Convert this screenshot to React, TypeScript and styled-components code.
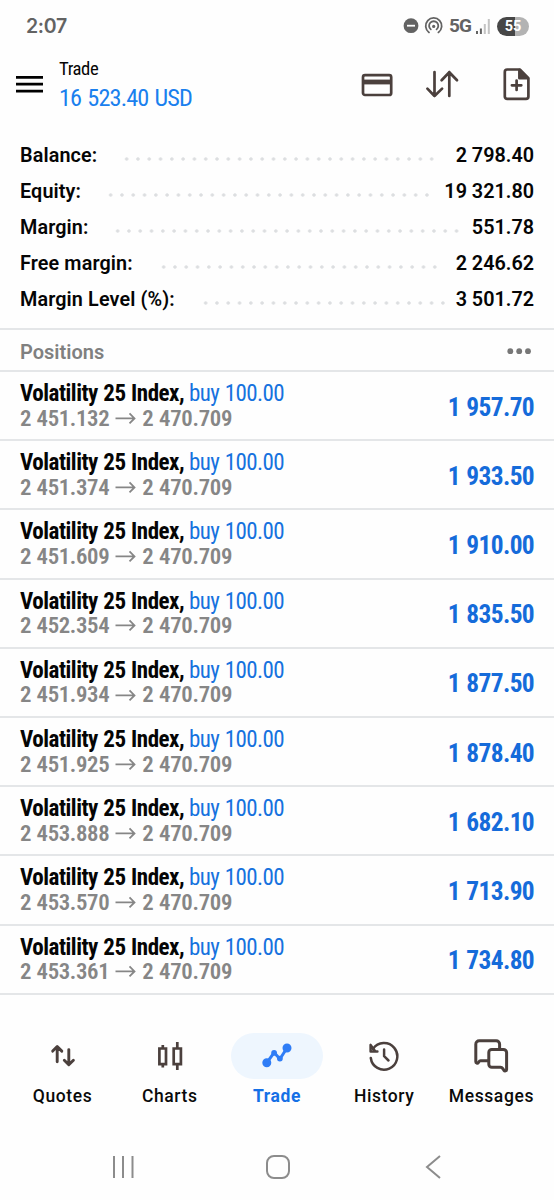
import React from 'react';
import styled, { createGlobalStyle } from 'styled-components';

const ink = '#4b403d';
const line = '#e4e6e8';

const Global = createGlobalStyle`
  * { box-sizing: border-box; }
  body { margin: 0; background: #fefefe; font-family: Roboto, "Liberation Sans", sans-serif; color: #050505; }
`;

const Screen = styled.main`
  width: 554px;
  height: 1200px;
  display: flex;
  flex-direction: column;
  overflow: hidden;
`;

const StatusBar = styled.div`
  height: 52px;
  padding: 0 25px 0 26px;
  display: flex;
  align-items: center;
  justify-content: space-between;
  color: #636363;
`;

const Clock = styled.span`
  font: 600 19.5px/24px Inter, sans-serif;
  letter-spacing: -0.3px;
`;

const Indicators = styled.div`
  display: flex;
  align-items: center;
`;

const Network = styled.span`
  width: 22px;
  font-size: 19px;
  font-weight: 700;
  line-height: 24px;
  letter-spacing: -0.8px;
  margin: 0 5px 0 6px;
`;

const Battery = styled.span`
  width: 32px;
  height: 19px;
  margin-left: 7px;
  border-radius: 10px;
  background: linear-gradient(90deg, #474747 55%, #b3b3b3 55%);
  color: #fff;
  font-size: 14.5px;
  font-weight: 700;
  line-height: 20px;
  text-align: center;
`;

const Header = styled.header`
  height: 66px;
  padding: 0 23px 0 16px;
  display: flex;
  align-items: center;
`;

const Narrow = styled.span<{ $size: number; $weight?: number; $color?: string; $track?: number; $gap?: number }>`
  font-family: "Roboto Condensed", Roboto, sans-serif;
  font-stretch: 75%;
  font-size: ${(p) => p.$size}px;
  font-weight: ${(p) => p.$weight ?? 400};
  letter-spacing: ${(p) => p.$track ?? 0}px;
  word-spacing: ${(p) => p.$gap ?? 0}px;
  color: ${(p) => p.$color ?? 'inherit'};
  white-space: nowrap;
`;

const Titles = styled.div`
  margin-left: 16px;
  padding-bottom: 3px;
  flex: 1;
  display: flex;
  flex-direction: column;
  line-height: 28.5px;
`;

const Actions = styled.div`
  display: flex;
  align-items: center;
`;

const Summary = styled.section`
  height: 212px;
  padding: 19px 20px 0;
  border-bottom: 2px solid ${line};
`;

const SummaryRow = styled.div`
  height: 36px;
  display: flex;
  align-items: center;
  font-size: 19.8px;
  font-weight: 600;
`;

const SummaryLabel = styled.span<{ $width: number }>`
  width: ${(p) => p.$width}px;
  letter-spacing: 0.12px;
  white-space: nowrap;
`;

const Leader = styled.span<{ $dots: number }>`
  width: ${(p) => p.$dots * 11.3}px;
  height: 4px;
  margin-top: 7px;
  background: radial-gradient(circle at center, #dcdee0 1.3px, transparent 2.1px) 0 0 / 11.3px 4px repeat-x;
`;

const SummaryValue = styled.span`
  margin-left: auto;
`;

const SectionHead = styled.div`
  height: 42px;
  padding: 3px 22px 0 20px;
  display: flex;
  align-items: center;
  justify-content: space-between;
  border-bottom: 2px solid ${line};
  color: #808080;
  font-size: 20px;
  font-weight: 600;
`;

const Position = styled.div`
  height: 69.2px;
  padding: 2px 20px 0;
  display: flex;
  align-items: center;
  justify-content: space-between;
  border-bottom: 2px solid ${line};
`;

const Details = styled.div`
  display: flex;
  flex-direction: column;
  line-height: 24.5px;
`;

const DetailLine = styled.div`
  display: flex;
  align-items: center;
  height: 24.5px;
`;

const Instrument = styled(Narrow)`
  width: 169px;
`;

const Tabs = styled.nav`
  margin-top: 38px;
  padding: 0 9px;
  display: grid;
  grid-template-columns: repeat(5, 1fr);
`;

const Tab = styled.div<{ $active?: boolean }>`
  display: flex;
  flex-direction: column;
  align-items: center;
  font-size: 17.5px;
  font-weight: ${(p) => (p.$active ? 700 : 500)};
  letter-spacing: 0.6px;
  line-height: 24px;
  color: ${(p) => (p.$active ? '#1570e6' : '#0a0a0a')};
`;

const Pill = styled.span<{ $active?: boolean }>`
  width: 92px;
  height: 46px;
  margin-bottom: 5px;
  border-radius: 23px;
  display: grid;
  place-items: center;
  background: ${(p) => (p.$active ? '#eef6fe' : 'transparent')};
`;

const SystemBar = styled.div`
  margin-top: auto;
  height: 66px;
  padding: 0 113px 0 112px;
  display: flex;
  align-items: center;
  justify-content: space-between;
`;

const HomeKey = styled.svg`
  margin-right: 3px;
`;

const summary = [
  { label: 'Balance:', value: '2 798.40', start: 101, dots: 28 },
  { label: 'Equity:', value: '19 321.80', start: 84.7, dots: 29 },
  { label: 'Margin:', value: '551.78', start: 92.3, dots: 31 },
  { label: 'Free margin:', value: '2 246.62', start: 138, dots: 25 },
  { label: 'Margin Level (%):', value: '3 501.72', start: 179.7, dots: 22 },
];

const positions = [
  ['2 451.132', '1 957.70'],
  ['2 451.374', '1 933.50'],
  ['2 451.609', '1 910.00'],
  ['2 452.354', '1 835.50'],
  ['2 451.934', '1 877.50'],
  ['2 451.925', '1 878.40'],
  ['2 453.888', '1 682.10'],
  ['2 453.570', '1 713.90'],
  ['2 453.361', '1 734.80'],
];

const QuotesIcon = () => (
  <svg width="26" height="26" viewBox="0 0 26 26" fill="none" stroke={ink} strokeWidth="2.9" strokeLinecap="round" strokeLinejoin="round">
    <path d="M7.2 18.8V4M2.7 8.1l4.5-4.6 4.6 4.6M18.8 6.6v14.6M14.3 17.2l4.5 4.6 4.6-4.6" />
  </svg>
);

const ChartsIcon = () => (
  <svg width="26" height="30" viewBox="0 0 26 30" fill="none" stroke={ink} strokeWidth="2.7">
    <path d="M2.4 7.5h6.6v15.6H2.4zM5.8 4v3.5M5.8 23v3.4M16.7 7.5h7.2v15.6h-7.2zM20.3 1v6.5M20.3 23v6" />
  </svg>
);

const TradeIcon = () => (
  <svg width="32" height="28" viewBox="0 0 32 28" fill="#2f7df6" stroke="#2f7df6" strokeWidth="3" strokeLinejoin="round">
    <path d="M5.7 20.8L13.1 10.6L18.9 17L26 6" fill="none" />
    <circle cx="5.8" cy="20.8" r="3" />
    <circle cx="26" cy="6" r="3" />
    <circle cx="13.1" cy="10.8" r="1.4" />
    <circle cx="18.9" cy="16.6" r="1.4" />
  </svg>
);

const HistoryIcon = () => (
  <svg width="32" height="32" viewBox="0 0 32 32" fill="none" stroke={ink} strokeWidth="2.5" strokeLinecap="round" strokeLinejoin="round">
    <path d="M2.8 18A13.3 13.3 0 1 0 5 8.9" />
    <path d="M2.6 5v6.5h6.8M2.6 5l4.8 6.4M16.1 9.4v6.8l4.4 4.3" />
  </svg>
);

const MessagesIcon = () => (
  <svg width="38" height="36" viewBox="0 0 38 36" fill="none" stroke={ink} strokeWidth="3" strokeLinecap="round" strokeLinejoin="round">
    <path d="M16.5 22.8H8.6c-1 0-1.6.8-2.3 1.8-.7 1-2.5.5-2.5-.9V6.2A3.4 3.4 0 0 1 7.2 2.8h17a3.4 3.4 0 0 1 3.4 3.4v5" />
    <path d="M19.8 11.4h11.6a3.2 3.2 0 0 1 3.2 3.2v16.8c0 1.7-1.9 2-2.7.9l-1.1-1.7a3 3 0 0 0-2.4-1.3h-8.6a3 3 0 0 1-3-3V14.5a3 3 0 0 1 3-3.1z" />
  </svg>
);

const tabs = [
  { name: 'Quotes', icon: <QuotesIcon /> },
  { name: 'Charts', icon: <ChartsIcon /> },
  { name: 'Trade', icon: <TradeIcon />, active: true },
  { name: 'History', icon: <HistoryIcon /> },
  { name: 'Messages', icon: <MessagesIcon /> },
];

export default function App() {
  return (
    <Screen>
      <Global />
      <StatusBar>
        <Clock>2:07</Clock>
        <Indicators>
          <svg width="40" height="18" viewBox="0 0 40 18" fill="none" stroke="#636363">
            <circle cx="8" cy="8.7" r="7.4" fill="#636363" stroke="none" />
            <path d="M4 8.7h8" stroke="#fff" strokeWidth="1.8" />
            <g strokeWidth="1.8" strokeLinecap="round">
              <path d="M26 15.4a8 8 0 1 1 9.4 0" />
              <path d="M27.8 12.4a4.6 4.6 0 1 1 5.8 0" />
            </g>
            <circle cx="30.7" cy="9.4" r="1.6" fill="#636363" stroke="none" />
          </svg>
          <Network>5G</Network>
          <svg width="14" height="15" viewBox="0 0 14 15" strokeWidth="2">
            <path d="M1 12V15M4.9 9.5V15" stroke="#636363" />
            <path d="M8.8 5V15M12.8 0V15" stroke="#c4c4c4" />
          </svg>
          <Battery>55</Battery>
        </Indicators>
      </StatusBar>
      <Header>
        <svg width="27" height="20" viewBox="0 0 27 20" stroke="#000" strokeWidth="2.8">
          <path d="M0 2.4h27M0 9.2h27M0 16.2h27" />
        </svg>
        <Titles>
          <Narrow $size={18.7} $track={-0.4}>Trade</Narrow>
          <Narrow $size={24.3} $track={-0.9} $gap={1.5} $color="#1a80ee">16 523.40 USD</Narrow>
        </Titles>
        <Actions>
          <svg width="170" height="34" viewBox="0 0 170 34" fill="none" stroke={ink} strokeWidth="2.7" strokeLinecap="round" strokeLinejoin="round">
            <rect x="2" y="7.2" width="28.2" height="19.8" rx="2" />
            <path d="M2 14h28" strokeWidth="4.8" strokeLinecap="butt" />
            <path d="M73.5 4v24M66.4 20.6l7.1 7.4 7.6-7.4M88.3 28V4.2M80.6 12.2l7.7-8 7.7 8" />
            <path d="M146.2 1.5h12.6l8.6 8.6v18.4a2.4 2.4 0 0 1-2.4 2.4h-18.8a2.4 2.4 0 0 1-2.4-2.4V3.9a2.4 2.4 0 0 1 2.4-2.4z" />
            <path d="M158.4 2v8.2h8.4z" fill={ink} />
            <path d="M155.6 12.6v9.4M150.9 17.3h9.4" />
          </svg>
        </Actions>
      </Header>
      <Summary>
        {summary.map((s) => (
          <SummaryRow key={s.label}>
            <SummaryLabel $width={s.start}>{s.label}</SummaryLabel>
            <Leader $dots={s.dots} />
            <SummaryValue>{s.value}</SummaryValue>
          </SummaryRow>
        ))}
      </Summary>
      <SectionHead>
        <span>Positions</span>
        <svg width="25" height="7" viewBox="0 0 25 7" fill="#777">
          <circle cx="3.3" cy="3.2" r="2.9" />
          <circle cx="12.2" cy="3.2" r="2.9" />
          <circle cx="21" cy="3.2" r="2.9" />
        </svg>
      </SectionHead>
      {positions.map(([open, profit]) => (
        <Position key={open}>
          <Details>
            <DetailLine>
              <Instrument $size={23} $weight={700} $track={-0.48} $gap={0.7}>Volatility 25 Index,</Instrument>
              <Narrow $size={23} $track={-0.62} $gap={1} $color="#1672de">buy 100.00</Narrow>
            </DetailLine>
            <DetailLine>
              <Narrow $size={22.8} $weight={600} $track={-0.35} $gap={0.5} $color="#868686">{open}</Narrow>
              <svg width="33" height="14" viewBox="0 0 33 14" fill="none" stroke="#868686" strokeWidth="1.8">
                <path d="M6.5 6.4h19M20.5 1.4l5 5-5 5" />
              </svg>
              <Narrow $size={22.8} $weight={600} $track={-0.3} $gap={0.5} $color="#868686">2 470.709</Narrow>
            </DetailLine>
          </Details>
          <Narrow $size={25.4} $weight={700} $track={-0.65} $gap={1.2} $color="#156bda">{profit}</Narrow>
        </Position>
      ))}
      <Tabs>
        {tabs.map((t) => (
          <Tab key={t.name} $active={t.active}>
            <Pill $active={t.active}>{t.icon}</Pill>
            {t.name}
          </Tab>
        ))}
      </Tabs>
      <SystemBar>
        <svg width="22" height="24" viewBox="0 0 22 24" stroke="#8c8c8c" strokeWidth="2">
          <path d="M2 1v22M11 1v22M20.5 1v22" />
        </svg>
        <HomeKey width="24" height="24" viewBox="0 0 24 24" fill="none" stroke="#8c8c8c" strokeWidth="2">
          <rect x="1" y="1" width="22" height="22" rx="7" />
        </HomeKey>
        <svg width="16" height="24" viewBox="0 0 16 24" fill="none" stroke="#8c8c8c" strokeWidth="2">
          <path d="M15 1L2 12l13 11" />
        </svg>
      </SystemBar>
    </Screen>
  );
}
